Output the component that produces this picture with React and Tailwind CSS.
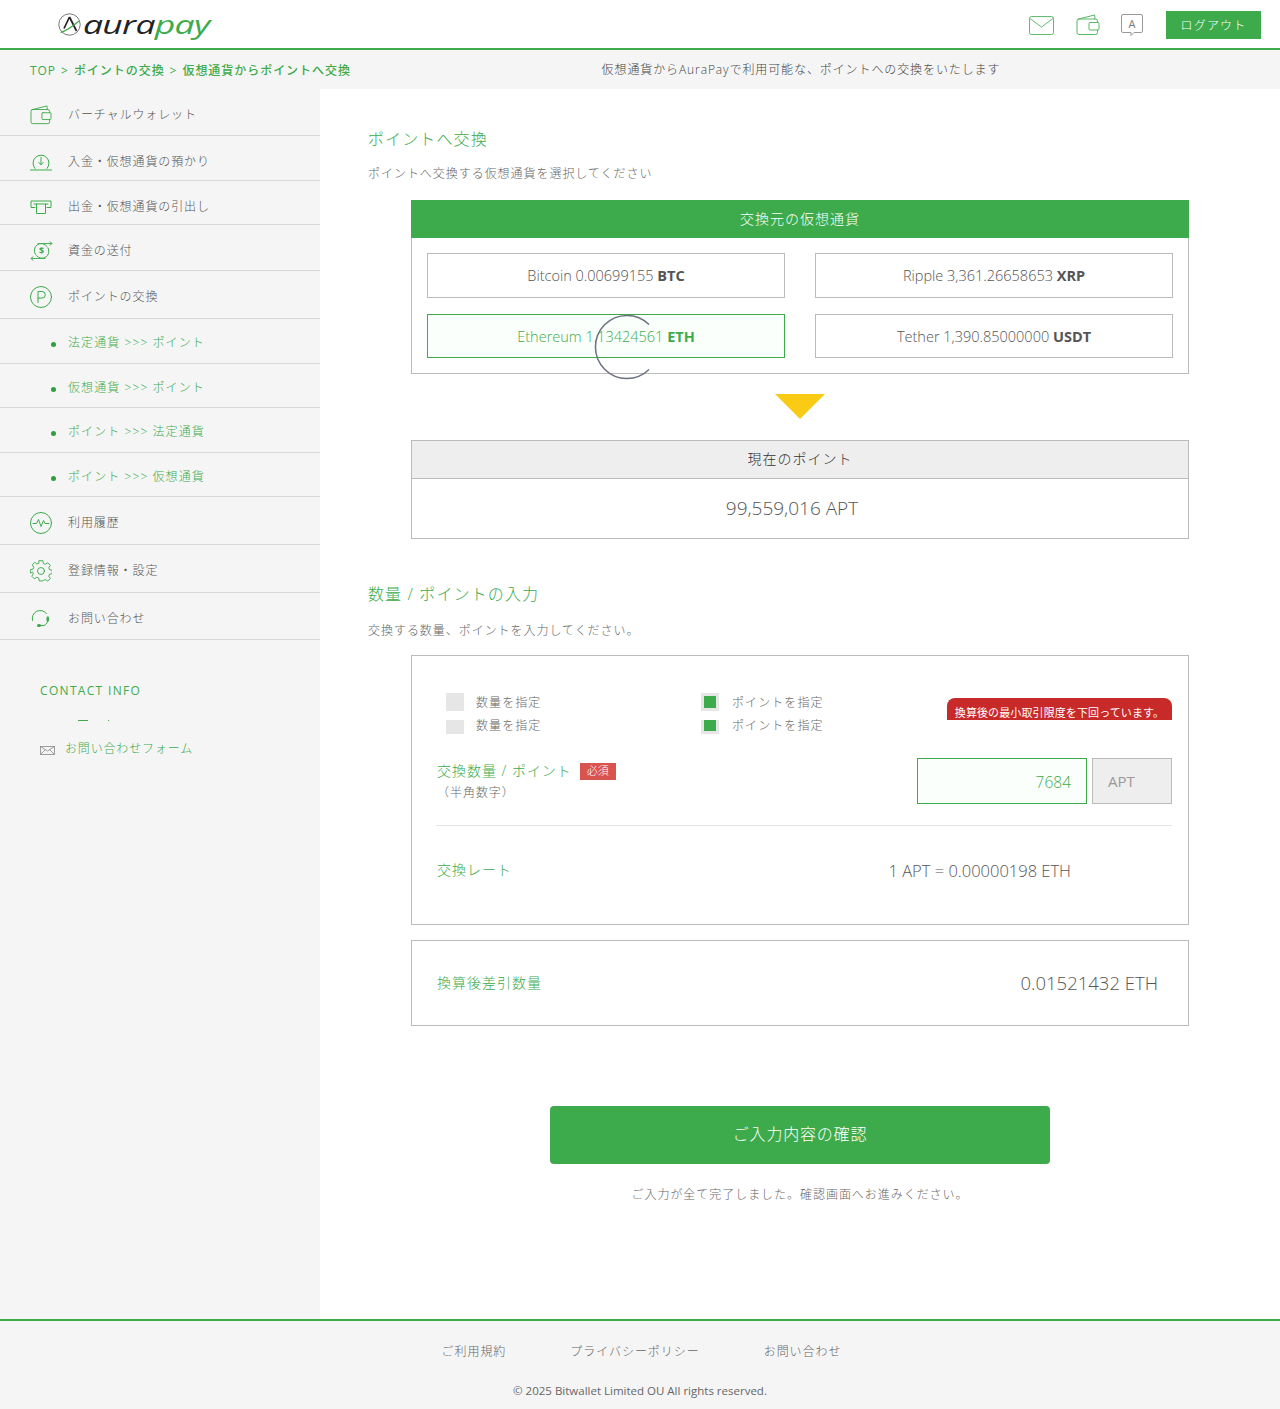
import React from "react";

const G = "#3dab4b";
const S = { fill: "none", stroke: G, strokeWidth: 1, strokeLinecap: "round", strokeLinejoin: "round" };

const Wallet = ({ w = 24, h = 22 }) => (
  <svg width={w} height={h} viewBox="0 0 24 22" {...S}>
    <path d="M21.500 8.500V7a2 2 0 0 0-2-2H3a2 2 0 0 0-2 2v11.500a2 2 0 0 0 2 2h16.500a2 2 0 0 0 2-2V16" />
    <path d="M2 5.200 18.500 1 19 5" />
    <rect x="13" y="8.500" width="10" height="7.500" rx="1" />
  </svg>
);
const Deposit = () => (
  <svg width="22" height="18" viewBox="0 0 22 18" {...S}>
    <path d="M5 15.500A8 8 0 1 1 17 15.500" />
    <path d="M0.500 17h21" />
    <path d="M11 4.500v7M8.800 9.500 11 11.800l2.200-2.300" />
  </svg>
);
const Withdraw = () => (
  <svg width="22" height="14" viewBox="0 0 22 14" {...S}>
    <path d="M5 7.500H1V1h20v6.500h-4" />
    <path d="M6.500 4v9.500h9V4" />
    <path d="M4 4h14" />
  </svg>
);
const Send = () => (
  <svg width="23" height="20" viewBox="0 0 23 20" {...S}>
    <path d="M5.500 13.500A7 7 0 0 1 17 5.500M18 6.800a7 7 0 0 1-11.500 7.900" />
    <path d="M8 2.500h14M20 .800l2 1.700-2 1.700M1 17.500h14M3 15.800l-2 1.700 2 1.700" strokeWidth="0.900" />
    <text x="11.500" y="13" textAnchor="middle" fontSize="9" fontWeight="700" fill={G} stroke="none" fontFamily="Open Sans">$</text>
  </svg>
);
const PIcon = () => (
  <svg width="22" height="22" viewBox="0 0 22 22" {...S}>
    <circle cx="11" cy="11" r="10.500" />
    <path d="M8 16.500V5.500h4a3.300 3.300 0 0 1 0 6.600H8" />
  </svg>
);
const Pulse = () => (
  <svg width="22" height="22" viewBox="0 0 22 22" {...S}>
    <circle cx="11" cy="11" r="10.500" />
    <path d="M3 11.500h3.500l2-4 2.500 7 2.500-6 1.500 3h4" />
  </svg>
);
const Gear = () => (
  <svg width="22" height="22" viewBox="0 0 24 24" {...S} strokeWidth="1.050">
    <path d="M10 1h4l.7 3.200 2 .8L19.500 3.300l2.800 2.800-1.700 2.800.8 2 3.100.7v3.800l-3.100.7-.8 2 1.700 2.800-2.800 2.800-2.800-1.700-2 .8L14 23.500h-4l-.7-3.300-2-.8-2.800 1.700-2.800-2.800 1.700-2.800-.8-2L0 14.800V11l3.100-.7.800-2L2.200 5.500 5 2.700l2.300 2 2-.8Z" transform="translate(0.300 -0.200) scale(0.98)" />
    <circle cx="12" cy="12" r="3.800" />
  </svg>
);
const Headset = () => (
  <svg width="20" height="18" viewBox="0 0 20 18" {...S}>
    <path d="M2.500 10.500A8 8 0 0 1 16.500 3.500" />
    <path d="M18 9c0 3-1.500 5.500-4 6.500H8" />
    <rect x="16.500" y="6.500" width="2.500" height="5" rx="1" fill={G} stroke="none" />
    <rect x="7" y="14" width="4" height="3" rx="1.500" fill={G} stroke="none" />
  </svg>
);

const navTop = [
  { t: "バーチャルウォレット", h: "h-[47px] pt-[6px]", i: <Wallet w={22} h={20} /> },
  { t: "入金・仮想通貨の預かり", h: "h-[45px] pt-[8px]", i: <Deposit /> },
  { t: "出金・仮想通貨の引出し", h: "h-[44px] pt-[8px]", i: <Withdraw /> },
  { t: "資金の送付", h: "h-[46px] pt-[6px]", i: <Send /> },
  { t: "ポイントの交換", h: "h-[48px] pt-[4px]", i: <PIcon /> },
];
const navSub = [
  { t: "法定通貨 >>> ポイント", h: "h-[45px]" },
  { t: "仮想通貨 >>> ポイント", h: "h-[44px]" },
  { t: "ポイント >>> 法定通貨", h: "h-[45px]" },
  { t: "ポイント >>> 仮想通貨", h: "h-[44px]" },
];
const navBottom = [
  { t: "利用履歴", h: "h-[48px] pt-[4px]", i: <Pulse /> },
  { t: "登録情報・設定", h: "h-[48px] pt-[4px]", i: <Gear /> },
  { t: "お問い合わせ", h: "h-[47px] pt-[6px]", i: <Headset /> },
];

function NavRow({ item }) {
  return (
    <div className={`${item.h} flex items-center border-b border-[#d8d8d8] pl-[30px]`}>
      <span className="flex w-[38px] shrink-0 items-center">{item.i}</span>
      <span className="text-[12px] font-light tracking-[0.075em] text-[#555]">{item.t}</span>
    </div>
  );
}

function Card({ name, amt, unit, active, low }) {
  return (
    <div
      className={`flex h-full items-center justify-center border text-[14.500px] font-light ${
        active ? "border-[#3dab4b] bg-[#fbfffb] text-[#3dab4b]" : "border-[#bbb] text-[#555]"
      } ${low ? "pt-[2px]" : ""}`}
    >
      <span>
        {name} {amt} <b className={active ? "font-bold" : "font-bold text-[#555]"}>{unit}</b>
      </span>
    </div>
  );
}

const Radio = ({ on, cut }) => (
  <span className={`flex w-[18px] shrink-0 justify-center bg-[#e6e6e6] ${cut ? "h-[14px]" : "h-[18px] items-center"}`}>
    {on && <span className={`block w-[12px] bg-[#3dab4b] ${cut ? "h-[11px]" : "h-[12px]"}`} />}
  </span>
);
const RadioLabel = ({ children, cut, far }) => (
  <span className={`${far ? "ml-[13px]" : "ml-[12px]"} ${cut ? "relative -top-px" : "relative top-px"} text-[12px] font-light tracking-[0.09em] text-[#666]`}>{children}</span>
);

export default function App() {
  return (
    <div className="w-[1280px] bg-white font-['Open_Sans','Noto_Sans_CJK_JP',sans-serif] text-[#666]">
      <header className="flex h-[50px] items-center justify-between border-b-2 border-[#3dab4b] bg-white pl-[58px] pr-[19px] pt-[2px]">
        <div className="flex items-center">
          <svg width="23" height="23" viewBox="0 0 23 23" fill="none" className="-mt-[2px]">
            <circle cx="11.500" cy="11.500" r="10.700" stroke="#555" strokeWidth="0.800" />
            <path d="M11.500 4 18.500 18M11.500 4 6 15.500" stroke="#222" strokeWidth="1.700" />
            <path d="M2.500 19.500C8 18 15 13 21 8" stroke={G} strokeWidth="1.200" />
          </svg>
          <span className="ml-[2px] -mt-[2px] origin-left scale-x-[1.42] text-[25px] leading-[30px] font-normal italic tracking-[-0.02em] text-[#222]">
            aura<span className="text-[#3dab4b]">pay</span>
          </span>
        </div>
        <div className="flex items-center">
          <svg width="25" height="19" viewBox="0 0 25 19" fill="none" stroke={G} strokeOpacity="0.8" className="mr-[22px]">
            <rect x="0.500" y="0.500" width="24" height="18" rx="2" />
            <path d="M1 2.500 12.500 11 24 2.500" />
          </svg>
          <span className="mr-[21px] flex opacity-85"><Wallet /></span>
          <svg width="22" height="23" viewBox="0 0 22 23" fill="none" stroke="#999" className="mr-[23px]">
            <path d="M2 .5h18a1.500 1.500 0 0 1 1.500 1.500v15a1.500 1.500 0 0 1-1.500 1.500h-7l-3 3v-3H2A1.500 1.500 0 0 1 .5 17V2A1.500 1.500 0 0 1 2 .5Z" />
            <text x="11" y="14" textAnchor="middle" fontSize="11" fill="#777" stroke="none" fontFamily="Open Sans">A</text>
          </svg>
          <div className="flex h-[28px] w-[95px] items-center justify-center bg-[#3dab4b] pt-[2px] text-[12px] font-light tracking-[0.1em] text-white">ログアウト</div>
        </div>
      </header>

      <div className="flex h-[39px] items-center bg-[#f5f5f5]">
        <div className="w-[320px] whitespace-nowrap pl-[30px] pt-[2px] text-[12px] font-medium tracking-[0.08em] text-[#3dab4b]">
          TOP<span className="mx-[5px] font-normal">&gt;</span>ポイントの交換<span className="mx-[5px] font-normal">&gt;</span>仮想通貨からポイントへ交換
        </div>
        <div className="flex-1 pl-[2px] text-center text-[12px] font-light tracking-[0.075em] text-[#444]">
          仮想通貨からAuraPayで利用可能な、ポイントへの交換をいたします
        </div>
      </div>

      <div className="flex">
        <aside className="w-[320px] shrink-0 bg-[#f5f5f5]">
          {navTop.map((n) => <NavRow key={n.t} item={n} />)}
          {navSub.map((n) => (
            <div key={n.t} className={`${n.h} flex items-center border-b border-[#d8d8d8] pl-[51px] pt-[4px]`}>
              <span className="mr-[12px] mt-[3px] h-[5px] w-[5px] rounded-full bg-[#2e9e3f]" />
              <span className="text-[12px] font-light tracking-[0.09em] text-[#3dab4b]">{n.t}</span>
            </div>
          ))}
          {navBottom.map((n) => <NavRow key={n.t} item={n} />)}

          <div className="pl-[40px] pt-[42px]">
            <div className="text-[12px] leading-[18px] tracking-[0.11em] text-[#3dab4b]">CONTACT INFO</div>
            <div className="mt-[20px] flex h-[2px] items-start pl-[38px]">
              <span className="h-px w-[10px] bg-[#3dab4b]" />
              <span className="ml-[20px] h-px w-px bg-[#3dab4b]" />
            </div>
            <div className="mt-[18px] flex items-center">
              <svg width="15" height="9" viewBox="0 0 15 9" fill="none" stroke="#888" strokeWidth="0.800" className="mt-[3px]">
                <rect x="0.500" y="0.500" width="14" height="8" />
                <path d="M.5.500 7.500 5l7-4.500M.5 8.500 5.500 3.500M14.500 8.500l-5-5" />
              </svg>
              <span className="ml-[10px] text-[12px] font-light leading-[18px] tracking-[0.07em] text-[#3dab4b]">お問い合わせフォーム</span>
            </div>
          </div>
        </aside>

        <main className="relative w-[960px] pb-[117px]">
          <div className="pl-[48px]">
            <h2 className="mt-[40px] text-[16px] leading-[21px] font-light tracking-[0.07em] text-[#3dab4b]">ポイントへ交換</h2>
            <p className="mt-[15px] h-[17px] text-[12px] leading-[18px] font-light tracking-[0.08em] text-[#666]">ポイントへ交換する仮想通貨を選択してください</p>
          </div>

          <section className="mx-auto mt-[18px] w-[778px]">
            <div className="flex h-[38px] items-center justify-center bg-[#3dab4b] pb-[2px] text-[14px] font-light tracking-[0.07em] text-white">交換元の仮想通貨</div>
            <div className="border border-t-0 border-[#bbb] p-[15px]">
              <div className="grid grid-cols-2 grid-rows-[45px_44px] gap-x-[30px] gap-y-[16px]">
                <Card name="Bitcoin" amt="0.00699155" unit="BTC" />
                <Card name="Ripple" amt="3,361.26658653" unit="XRP" />
                <Card name="Ethereum" amt="1.13424561" unit="ETH" active low />
                <Card name="Tether" amt="1,390.85000000" unit="USDT" low />
              </div>
            </div>
            <div className="mx-auto mt-[20px] h-0 w-0 border-x-[25px] border-t-[25px] border-x-transparent border-t-[#facb15]" />
            <div className="mt-[21px] border border-[#bbb]">
              <div className="flex h-[38px] items-center justify-center border-b border-[#bbb] bg-[#eee] pb-[2px] text-[14px] font-light tracking-[0.07em] text-[#333]">現在のポイント</div>
              <div className="flex h-[59px] items-center justify-center pr-[16px] text-[19px] font-light text-[#555]">99,559,016 APT</div>
            </div>
          </section>

          <div className="pl-[48px]">
            <h2 className="mt-[45px] text-[16px] leading-[21px] tracking-[0.07em] font-light text-[#3dab4b]">数量 / ポイントの入力</h2>
            <p className="mt-[17px] h-[17px] text-[12px] leading-[18px] font-light tracking-[0.08em] text-[#666]">交換する数量、ポイントを入力してください。</p>
          </div>

          <section className="mx-auto mt-[16px] w-[778px]">
            <div className="h-[270px] border border-[#bbb] pl-[24px] pr-[16px] pt-[37px]">
              <div className="flex h-[41px]">
                <div className="flex flex-col pl-[10px]">
                  <div className="flex h-[27px] items-start">
                    <span className="flex w-[255px] items-center"><Radio /><RadioLabel>数量を指定</RadioLabel></span>
                    <span className="flex items-center"><Radio on /><RadioLabel far>ポイントを指定</RadioLabel></span>
                  </div>
                  <div className="flex h-[14px] items-center">
                    <span className="flex w-[255px] items-center"><Radio cut /><RadioLabel cut>数量を指定</RadioLabel></span>
                    <span className="flex items-center"><Radio cut on /><RadioLabel cut far>ポイントを指定</RadioLabel></span>
                  </div>
                </div>
                <div className="ml-auto mt-[5px] flex h-[22px] w-[225px] items-end justify-center overflow-hidden rounded-t-[8px] bg-[#c82a29] text-[11px] leading-[14px] tracking-[0.01em] text-white whitespace-nowrap">換算後の最小取引限度を下回っています。</div>
              </div>

              <div className="mt-[24px] flex h-[46px]">
                <div className="pl-px pt-[3px]">
                  <div className="flex h-[18px] items-center">
                    <span className="text-[14px] font-light tracking-[0.07em] text-[#3dab4b]">交換数量 / ポイント</span>
                    <span className="ml-[8px] mt-[3px] flex h-[17px] w-[36px] items-center justify-center bg-[#d9534f] text-[11px] font-light text-white">必須</span>
                  </div>
                  <div className="mt-[5px] text-[12px] leading-[18px] font-light tracking-[0.08em] text-[#666]">（半角数字）</div>
                </div>
                <div className="ml-auto flex h-[46px] w-[170px] items-center justify-end border border-[#3dab4b] bg-[#fbfffb] pr-[15px] pt-[3px] text-[15.500px] font-light text-[#3dab4b]">7684</div>
                <div className="ml-[5px] flex h-[46px] w-[80px] items-center border border-[#bbb] bg-[#eee] pl-[15px] text-[15px] text-[#999]">APT</div>
              </div>

              <div className="mt-[21px] border-t border-[#e5e5e5]" />
              <div className="flex h-[90px] items-center">
                <span className="pb-[4px] pl-px text-[14px] font-light tracking-[0.07em] text-[#3dab4b]">交換レート</span>
                <span className="ml-auto mr-[101px] whitespace-nowrap text-[16.500px] font-light text-[#555]">1 APT = 0.00000198 ETH</span>
              </div>
            </div>

            <div className="mt-[15px] flex h-[86px] items-center border border-[#bbb] pl-[25px] pr-[30px]">
              <span className="pb-[2px] text-[14px] font-light tracking-[0.07em] text-[#3dab4b]">換算後差引数量</span>
              <span className="ml-auto text-[18.500px] font-light text-[#555]">0.01521432 ETH</span>
            </div>
          </section>

          <div className="mx-auto mt-[80px] flex h-[58px] w-[500px] items-center justify-center rounded-[4px] bg-[#3dab4b] pb-[2px] text-[16px] font-light tracking-[0.05em] text-white">ご入力内容の確認</div>
          <p className="mt-[22px] h-[16px] text-center text-[12px] leading-[18px] font-light tracking-[0.08em] text-[#666]">ご入力が全て完了しました。確認画面へお進みください。</p>

          <svg width="70" height="70" viewBox="0 0 70 70" fill="none" className="absolute left-[272px] top-[223px]">
            <path d="M57 12.500A31.500 31.500 0 1 0 57 57.500" stroke="#6b7280" strokeWidth="1.500" />
          </svg>
        </main>
      </div>

      <footer className="h-[90px] border-t-2 border-[#3dab4b] bg-[#f5f5f5]">
        <div className="flex justify-center gap-[64px] pl-[3px] pt-[22px] text-[12px] leading-[18px] font-light tracking-[0.08em] text-[#666]">
          <span>ご利用規約</span><span>プライバシーポリシー</span><span>お問い合わせ</span>
        </div>
        <div className="mt-[21px] text-center text-[11.500px] leading-[18px] text-[#666]">© 2025 Bitwallet Limited OU All rights reserved.</div>
      </footer>
    </div>
  );
}
